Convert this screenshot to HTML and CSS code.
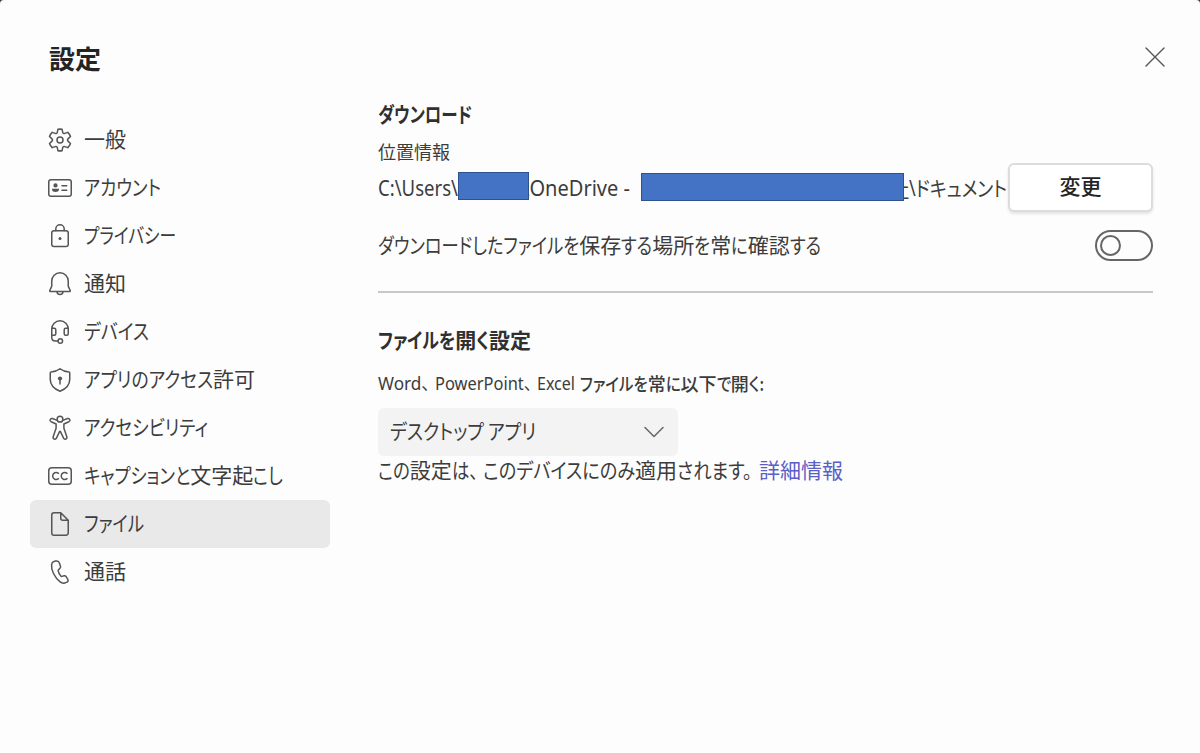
FILE: index.html
```
<!DOCTYPE html>
<html lang="ja">
<head>
    <meta charset="UTF-8">
    <meta name="viewport" content="width=device-width, initial-scale=1.0">
    <title>設定</title>
    <link rel="stylesheet" href="styles.css">
</head>
<body>
    <div class="dialog">
        <header class="header">
            <h1 class="title">設定</h1>
            <button class="close" aria-label="閉じる">
                <svg viewBox="0 0 20 20"><path d="M1 1l18 18M19 1L1 19"/></svg>
            </button>
        </header>

        <div class="main">
            <nav class="menu">
                <a class="menu-item">
                    <svg class="icon" viewBox="0 0 20 20"><path d="M8.600 1.900q1.400-.3 2.800 0l.4 2q.3 1.100 1.400.7l2-.7q1.200 1.100 1.800 2.800l-1.500 1.400q-1 .9 0 1.800l1.500 1.400q-.6 1.700-1.800 2.800l-2-.7q-1.100-.4-1.400.7l-.4 2q-1.400.3-2.800 0l-.4-2q-.3-1.100-1.400-.7l-2 .7q-1.200-1.100-1.800-2.800l1.500-1.400q1-.9 0-1.800L3 6.700q.6-1.700 1.800-2.800l2 .7q1.100.4 1.400-.7z" transform="translate(0 1)"/><circle cx="10" cy="10" r="2"/></svg>
                    <span class="text" data-width="42">一般</span>
                </a>
                <a class="menu-item">
                    <svg class="icon" viewBox="0 0 20 20"><rect x="2.500" y="4.500" width="15" height="11" rx="1.500"/><path d="M11.300 8.500h3.200M11.300 11.500h3.200"/><circle class="solid" cx="7" cy="8.300" r="1.400"/><path class="solid" d="M4.700 10.500h4.600v.7c0 2-4.600 2-4.600 0z"/></svg>
                    <span class="text" data-width="77">アカウント</span>
                </a>
                <a class="menu-item">
                    <svg class="icon" viewBox="0 0 20 20"><rect x="4.500" y="6.500" width="11" height="10.500" rx="1.500"/><path d="M7.200 6.500V5.300a2.800 2.800 0 0 1 5.600 0v1.200"/><circle class="solid" cx="10" cy="11.700" r="1"/></svg>
                    <span class="text" data-width="92">プライバシー</span>
                </a>
                <a class="menu-item">
                    <svg class="icon" viewBox="0 0 20 20"><path d="M10 2.500A5.500 5.500 0 0 0 4.500 8v3.400l-1.300 2.900c-.2.400.1.700.500.700h12.600c.4 0 .7-.3.500-.7l-1.300-2.900V8A5.500 5.500 0 0 0 10 2.500zM8 15a2 2 0 0 0 4 0"/></svg>
                    <span class="text" data-width="42">通知</span>
                </a>
                <a class="menu-item">
                    <svg class="icon" viewBox="0 0 20 20"><path d="M4.500 8a5.500 5.500 0 0 1 11 0M4.500 7.500h1.700a1 1 0 0 1 1 1v2.700a1 1 0 0 1-1 1H4.500zM15.500 7.500h-1.700a1 1 0 0 0-1 1v2.700a1 1 0 0 0 1 1h.7a1 1 0 0 0 1-1zM4.500 12.200v1.500c0 1.500 1 2.300 2.500 2.300h1.700"/><circle cx="10.200" cy="16" r="1.500"/></svg>
                    <span class="text" data-width="65">デバイス</span>
                </a>
                <a class="menu-item">
                    <svg class="icon" viewBox="0 0 20 20"><path d="M10 2.500c1.800 1.400 3.800 2.100 6 2.200q.5 0 .5.500v4.300c0 3.700-2.200 6.300-6.500 8-4.300-1.700-6.500-4.300-6.500-8V5.200q0-.5.500-.5c2.200-.1 4.200-.8 6-2.200zM10 9v3.600"/><circle class="solid" cx="10" cy="9" r="1.400"/></svg>
                    <span class="text" data-width="171">アプリのアクセス許可</span>
                </a>
                <a class="menu-item">
                    <svg class="icon" viewBox="0 0 20 20"><circle cx="10" cy="4.100" r="1.900"/><path d="M8.100 4.900L5 3.700c-1.500-.5-2.300 1.400-.9 2.100l3.300 1.500v2.900l-1.900 5.500c-.5 1.700 1.500 2.500 2.200.9l2-4.200q.3-.6.6 0l2 4.200c.7 1.600 2.700.8 2.200-.9l-1.900-5.500V7.300l3.300-1.500c1.400-.7.600-2.600-.9-2.100l-3.100 1.200"/></svg>
                    <span class="text" data-width="124">アクセシビリティ</span>
                </a>
                <a class="menu-item">
                    <svg class="icon" viewBox="0 0 20 20"><rect x="2.500" y="4.500" width="15" height="11" rx="2"/><path d="M9 8.200c-1.500-1.100-3.900-.5-3.900 1.800s2.400 2.900 3.900 1.800M14.700 8.200c-1.500-1.100-3.900-.5-3.900 1.800s2.400 2.900 3.900 1.800"/></svg>
                    <span class="text" data-width="199">キャプションと文字起こし</span>
                </a>
                <a class="menu-item selected">
                    <svg class="icon" viewBox="0 0 20 20"><path d="M6 2.500h4.500l5 5v8.500a1.500 1.500 0 0 1-1.500 1.500H6A1.500 1.500 0 0 1 4.500 16V4A1.500 1.500 0 0 1 6 2.500zM10.500 2.500v3.700a1.300 1.300 0 0 0 1.300 1.300h3.700"/></svg>
                    <span class="text" data-width="60">ファイル</span>
                </a>
                <a class="menu-item">
                    <svg class="icon" viewBox="0 0 20 20"><path d="M6.900 2.700l-.9.300c-1 .3-1.500 1-1.600 2-.4 3.400 1.900 8.800 5.700 11.600.9.700 2.100 1 3 .7l1.200-.4c1-.3 1.400-1.100.9-2l-1.100-1.800c-.3-.5-.8-.7-1.400-.6l-1.400.4c-.3.100-.6 0-.8-.3-.8-1-1.500-2.200-1.700-3.400 0-.3 0-.5.200-.7l1-1c.4-.4.500-.9.3-1.500l-.8-2.200c-.4-.9-1.300-1.400-2.600-1.100z"/></svg>
                    <span class="text" data-width="42">通話</span>
                </a>
            </nav>

            <main class="content">
                <section class="download">
                    <h2 class="heading"><span class="text" data-width="94">ダウンロード</span></h2>
                    <p class="label"><span class="text" data-width="72">位置情報</span></p>
                    <div class="location">
                        <div class="path">
                            <span class="text latin" data-width="80">C:\Users\</span>
                            <span class="mask mask-user"></span>
                            <span class="text latin onedrive" data-width="108">\OneDrive -</span>
                            <span class="mask mask-company"></span>
                            <span class="company-end">社</span>
                            <span class="text latin" data-width="98">\ドキュメント</span>
                        </div>
                        <button class="change">変更</button>
                    </div>
                    <div class="confirm">
                        <span class="text" data-width="443">ダウンロードしたファイルを保存する場所を常に確認する</span>
                        <span class="toggle"><span class="knob"></span></span>
                    </div>
                </section>

                <section class="open-files">
                    <h2 class="heading"><span class="text" data-width="153">ファイルを開く設定</span></h2>
                    <p class="label open-label">
                        <span class="text latin" data-width="52">Word、</span>
                        <span class="text latin" data-width="97">PowerPoint、</span>
                        <span class="text latin" data-width="38">Excel</span>
                        <span class="text medium" data-width="184">ファイルを常に以下で開く:</span>
                    </p>
                    <div class="select">
                        <span class="text" data-width="146">デスクトップ アプリ</span>
                        <svg class="chevron" viewBox="0 0 20 12"><path d="M1 1.500l9 9 9-9"/></svg>
                    </div>
                    <p class="note">
                        <span class="text" data-width="100">この設定は、</span>
                        <span class="text" data-width="269">このデバイスにのみ適用されます。</span>
                        <a class="link">詳細情報</a>
                    </p>
                </section>
            </main>
        </div>
    </div>
    <script src="script.js"></script>
</body>
</html>
```
FILE: styles.css
```
body {
    margin: 0;
    background: #404040;
    color: #3c3c3c;
    font-family: "Noto Sans CJK JP", sans-serif;
    font-size: 21px;
    line-height: 30px;
}
h1, h2, p {
    margin: 0;
}
svg {
    fill: none;
    stroke: currentColor;
    stroke-linecap: round;
    stroke-linejoin: round;
}
.dialog {
    box-sizing: border-box;
    height: 753px;
    padding: 39px 47px 0 30px;
    background: #fdfdfd;
    border-radius: 4px 4px 0 0;
}
.header {
    display: flex;
    justify-content: space-between;
    height: 59px;
}
.title {
    padding-left: 19px;
    font-size: 26px;
    line-height: 38px;
    color: #242424;
}
.close {
    display: flex;
    align-items: center;
    width: 20px;
    height: 36px;
    margin-right: -12px;
    padding: 0;
    border: none;
    background: none;
    color: #555;
}
.close svg {
    width: 20px;
    height: 20px;
    stroke-width: 1.4;
}
.main {
    display: flex;
    gap: 48px;
}

/* left menu */
.menu {
    width: 300px;
    padding-top: 17.5px;
}
.menu-item {
    display: flex;
    align-items: center;
    gap: 9px;
    height: 48px;
    padding-left: 15px;
    border-radius: 6px;
}
.menu-item .text {
    padding-bottom: 4px;
}
.selected {
    background: #e9e9e9;
}
.icon {
    width: 30px;
    height: 30px;
    color: #555;
}
.solid {
    fill: currentColor;
    stroke: none;
}

/* kana and latin runs are condensed by script.js */
.text {
    display: inline-block;
    white-space: nowrap;
}
.run {
    display: inline-block;
    white-space: pre;
    transform-origin: 0 50%;
    font-feature-settings: "palt";
}
.latin {
    font-family: "Noto Sans", "Noto Sans CJK JP", sans-serif;
}

/* right side */
.content {
    flex: 1;
}
.download {
    height: 193px;
    border-bottom: 2px solid #c8c8c8;
}
.heading {
    font-size: 21px;
    line-height: 30px;
    color: #303030;
}
.label {
    font-size: 18px;
    line-height: 26px;
}
.download .label {
    margin-top: 10px;
    height: 25px;
}
.location {
    display: flex;
    justify-content: space-between;
    height: 49px;
}
.path {
    display: flex;
    align-items: center;
}
.mask {
    z-index: 1;
    box-sizing: border-box;
    flex: none;
    height: 28px;
    margin-top: -3px;
    border: 1px solid #2f528f;
    background: #4472c4;
}
.mask-user {
    width: 71px;
}
.mask-company {
    width: 263px;
    margin-top: -1px;
    margin-left: 11px;
}
.onedrive {
    margin-left: -7px;
}
.company-end {
    margin-left: -16px;
}
.change {
    box-sizing: border-box;
    width: 145px;
    height: 49px;
    padding: 0 0 5px;
    border: 2px solid #dcdcdc;
    border-radius: 6px;
    background: #fff;
    box-shadow: 0 2px 3px rgba(0, 0, 0, .1);
    color: #242424;
    font-family: inherit;
    font-size: 21px;
    font-weight: 500;
}
.confirm {
    display: flex;
    align-items: center;
    justify-content: space-between;
    height: 67px;
}
.confirm .text {
    padding-bottom: 3px;
}
.toggle {
    box-sizing: border-box;
    width: 58px;
    height: 31px;
    padding: 3px;
    border: 2px solid #666;
    border-radius: 16px;
}
.knob {
    display: block;
    box-sizing: border-box;
    width: 21px;
    height: 21px;
    border: 2px solid #666;
    border-radius: 50%;
}
.open-files {
    padding-top: 31px;
}
.open-label {
    display: flex;
    gap: 5px;
    margin-top: 16px;
}
.medium {
    font-weight: 500;
}
.select {
    display: flex;
    align-items: center;
    justify-content: space-between;
    box-sizing: border-box;
    width: 300px;
    height: 48px;
    margin-top: 12px;
    padding: 0 14px 0 12px;
    border-radius: 6px;
    background: #f3f3f3;
}
.select .text {
    padding-bottom: 4px;
}
.chevron {
    width: 20px;
    height: 12px;
    color: #666;
    stroke-width: 1.5;
}
.note {
    display: flex;
    gap: 5px;
    margin-top: -2px;
}
.link {
    margin-left: 2px;
    color: #5b5fc7;
}
```
FILE: script.js
```
// squeeze the kana / latin parts of a label so the whole label gets its data-width,
// kanji keep their full width
document.querySelectorAll('.text').forEach((el) => {
    const parts = el.textContent.match(/[\u4e00-\u9fff]+|[^\u4e00-\u9fff]+/g);
    el.textContent = '';
    const runs = [];
    parts.forEach((part) => {
        const span = document.createElement('span');
        span.textContent = part;
        if (!/[\u4e00-\u9fff]/.test(part)) {
            span.className = 'run';
            runs.push(span);
        }
        el.appendChild(span);
    });

    const total = el.getBoundingClientRect().width;
    const widths = runs.map((run) => run.getBoundingClientRect().width);
    const sum = widths.reduce((a, b) => a + b, 0);
    if (!sum) return;

    const scale = (Number(el.dataset.width) - (total - sum)) / sum;
    runs.forEach((run, i) => {
        run.style.width = widths[i] * scale + 'px';
        run.style.transform = `scaleX(${scale})`;
    });
});
```
